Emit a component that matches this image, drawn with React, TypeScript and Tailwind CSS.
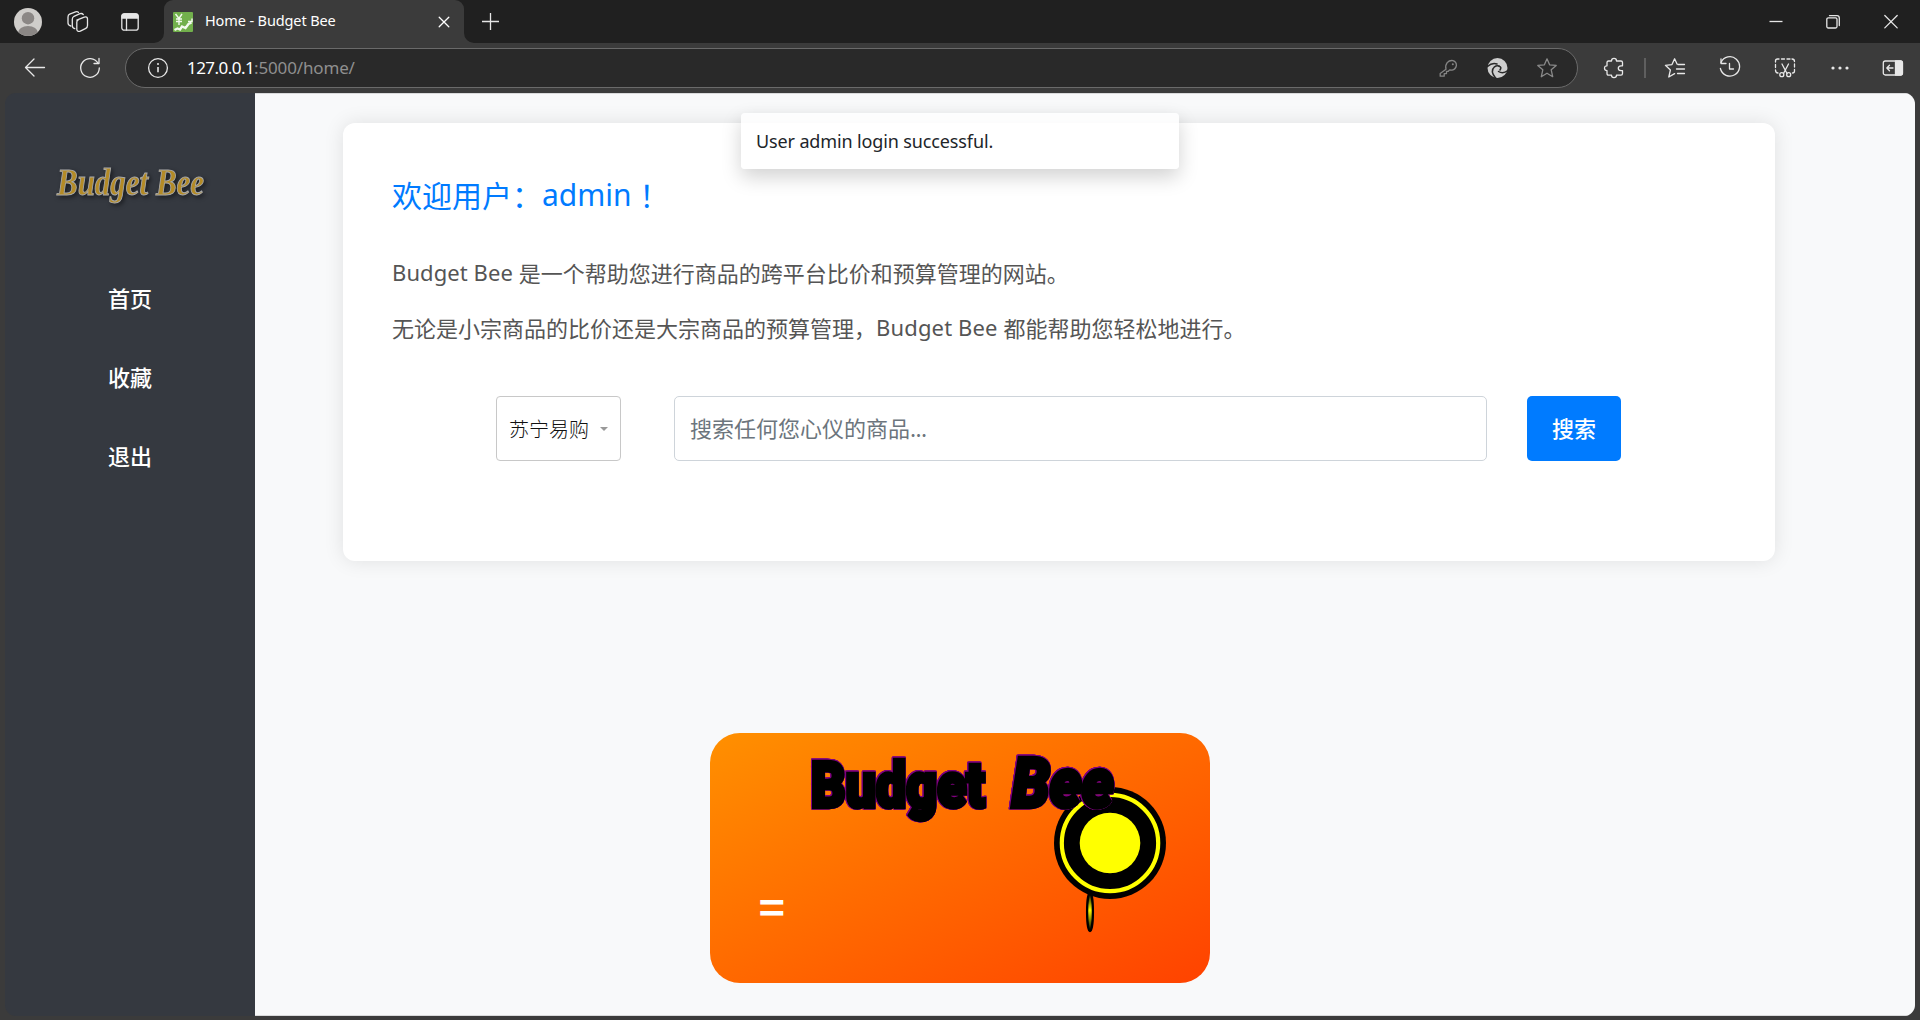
import React from "react";

type IconProps = { children: React.ReactNode; className?: string };

function Icon({ children, className = "" }: IconProps) {
  return (
    <svg
      viewBox="0 0 24 24"
      fill="none"
      stroke="currentColor"
      strokeWidth="1.3"
      strokeLinecap="round"
      strokeLinejoin="round"
      className={`size-6 shrink-0 ${className}`}
    >
      {children}
    </svg>
  );
}

const STAR =
  "M12 2.8l2.6 6 6.6.6-5 4.4 1.5 6.9L12 17.2l-5.7 3.5 1.5-6.9-5-4.4 6.6-.6z";

function TabStrip() {
  return (
    <div className="flex h-[43px] items-center bg-[#202020] text-[#e6e6e6]">
      <svg viewBox="0 0 28 28" className="ml-3.5 size-7 shrink-0">
        <defs>
          <clipPath id="avatar">
            <circle cx="14" cy="14" r="14" />
          </clipPath>
        </defs>
        <g clipPath="url(#avatar)">
          <rect width="28" height="28" fill="#cfcdca" />
          <circle cx="14" cy="10.2" r="6.2" fill="#8b8785" />
          <ellipse cx="14" cy="25" rx="10" ry="7" fill="#8b8785" />
        </g>
      </svg>
      <Icon className="ml-6">
        <path d="M10.800 10.200l7.500-3q3-1 3.200 1.700v6.700q0 2-1.700 2.800l-5.500 2.800q-3 1-3.500-1.700V12q0-1.500 1.500-2.200z" />
        <path d="M8.800 18.600q-2.500-.6-2.500-2.800V9.200q0-2 1.700-2.900l6-2.600q2.200-.6 3.300.9" />
        <path d="M4.800 16q-2.800-.6-2.800-2.900V6.900q0-2 1.700-2.800l5.800-2.300q2-.6 3 .6" />
      </Icon>
      <Icon className="ml-7">
        <rect x="3.800" y="3.800" width="16.400" height="16.400" rx="2.500" />
        <path d="M4 6.500Q4 3.800 6.500 3.800h11q2.500 0 2.500 2.700V8H4z" fill="currentColor" />
        <path d="M8.500 8v12" />
      </Icon>
      <div className="relative ml-[22px] flex h-[43px] w-[300px] items-center rounded-t-[9px] bg-[#3b3b3b]">
        <svg viewBox="0 0 10 10" className="absolute bottom-0 -left-2.5 size-2.5">
          <path d="M10 0v10H0A10 10 0 0 0 10 0z" fill="#3b3b3b" />
        </svg>
        <svg viewBox="0 0 10 10" className="absolute bottom-0 -right-2.5 size-2.5">
          <path d="M0 0v10h10A10 10 0 0 1 0 0z" fill="#3b3b3b" />
        </svg>
        <svg viewBox="0 0 20 20" className="ml-[9px] size-5 shrink-0">
          <rect width="20" height="20" rx="1" fill="#72b04c" />
          <g stroke="#f3faee" fill="none">
            <path d="M2.500 2l3.500 4.500L9 2M6 6.500V13M3 7h6M3 9.500h6" strokeWidth="1.400" />
            <path d="M1.500 18l3-1.500 2.500 1 2-3 3.500 1.500L15.500 12l3-1.500" strokeWidth="2.300" />
            <path d="M15 9.500h4v-3" strokeWidth="1.400" />
          </g>
        </svg>
        <span className="mb-0.5 ml-3 whitespace-nowrap font-['Noto_Sans'] text-[14.5px] tracking-[-0.12px] text-white">
          Home - Budget Bee
        </span>
        <Icon className="ml-auto mr-2 text-white">
          <path d="M7.200 7.200l9.600 9.600M16.800 7.200l-9.600 9.600" />
        </Icon>
      </div>
      <Icon className="ml-3.5">
        <path d="M12.500 3v17M4 11.500h17" strokeLinecap="butt" />
      </Icon>
      <div className="ml-auto mr-[17px] flex">
        <Icon>
          <path d="M5.500 11.500h13" strokeLinecap="butt" />
        </Icon>
        <Icon className="ml-[33px]">
          <rect x="5.800" y="7.800" width="10.200" height="10.200" rx="1.500" />
          <path d="M8.500 5.700h7.500q2.300 0 2.300 2.300v7.500" />
        </Icon>
        <Icon className="ml-[34px]">
          <path d="M5.800 5.500l12.400 12.400M18.200 5.500L5.800 17.900" />
        </Icon>
      </div>
    </div>
  );
}

function Toolbar() {
  return (
    <div className="flex h-[50px] items-center bg-[#3b3b3b] text-[#e8e8e8]">
      <Icon className="ml-[23px]">
        <path d="M21.500 11.500H2.500M11 3L2.500 11.500 11 20" />
      </Icon>
      <Icon className="ml-[31px]">
        <path d="M20 7.200A9.300 9.300 0 1 0 21.300 12" />
        <path d="M21 2.500v5h-5" />
      </Icon>
      <div className="ml-[23px] flex h-10 w-[1453px] items-center rounded-full border border-[#6a6a6a] bg-[#292929]">
        <Icon className="ml-[20px]">
          <circle cx="12" cy="12" r="9.400" />
          <path d="M12 11v5.200" strokeWidth="1.600" strokeLinecap="butt" />
          <circle cx="12" cy="8" r="1" fill="currentColor" stroke="none" />
        </Icon>
        <span className="ml-[17px] whitespace-nowrap font-['Noto_Sans'] text-[17px] text-[#8f8f8f]">
          <span className="tracking-[-0.55px] text-white">127.0.0.1</span>
          <span className="tracking-[-0.15px]">:5000/home/</span>
        </span>
        <Icon className="ml-auto text-[#858585]">
          <path d="M10 13.200Q9 9.500 11.200 6.600 13.500 4 17 4.600q3.500 1.200 3.400 4.900-.8 4-4.400 4.600l-2.400-.2L12.300 15.300H10.500v2.300H8.200V20.200H4.200V17.500z" />
          <circle cx="16.800" cy="8.200" r="1" fill="currentColor" stroke="none" />
        </Icon>
        <Icon className="ml-[25px] text-[#cfcfcf]">
          <circle cx="12.500" cy="12" r="10" fill="currentColor" stroke="none" />
          <g stroke="#292929">
            <path d="M2.500 10.500Q7 6.300 12 8" strokeWidth="1.500" />
            <path d="M10.500 22Q4.800 15 9.500 10.800 11.500 9.300 14 10" strokeWidth="1.500" />
            <path d="M22.800 14.500Q18 18.500 13.500 15.500" strokeWidth="1.500" />
            <path d="M14 10.200Q17 11 15 14" strokeWidth="1.600" />
          </g>
        </Icon>
        <Icon className="ml-[26px] mr-[18px] text-[#8a8a8a]">
          <path d={STAR} />
        </Icon>
      </div>
      <Icon className="ml-6">
        <path d="M6.500 5H9.500Q9.500 2.400 12 2.400T14.500 5H19Q20.500 5 20.500 6.500V9.800H19Q16.300 10 16.300 12.200T19 14.600H20.500V17.600Q20.500 19.200 19 19.200H14.500Q14.500 21.600 12 21.600T9.500 19.200H6.500Q5 19.200 5 17.600V14.600Q2.500 14.600 2.500 12.200T5 9.800V6.500Q5 5 6.500 5z" />
      </Icon>
      <div className="ml-[18px] h-5 w-0.5 bg-[#5f5f5f]" />
      <Icon className="ml-[17px]">
        <path d="M14.200 8.200L11.600 2.800 9 8.600l-6.600.7 5 4.700-1.600 7 5.800-3.400" />
        <path d="M15 8.500h6.500M13.500 13h8M14.500 17.500h7" />
      </Icon>
      <Icon className="ml-[31px]">
        <path d="M3 6.500A9.700 9.700 0 1 1 2.400 12.500" />
        <path d="M3 2.800v4.700h5" />
        <path d="M11.500 7.500V13h4" />
      </Icon>
      <Icon className="ml-[31px]">
        <path d="M2.500 6V5q0-2 2-2h1.500M8.500 3h3M14 3h3M19 3q2.500 0 2.500 2.500M21.500 8v3M21.500 13.500v1.500q0 2-2 2M2.500 8.500v3M2.500 14q0 3 2.500 3" />
        <path d="M9 8l5 9.500M15.500 8l-5 9.500" />
        <circle cx="8.800" cy="18.700" r="2" />
        <circle cx="15.700" cy="18.700" r="2" />
      </Icon>
      <Icon className="ml-[31px]">
        <g fill="currentColor" stroke="none">
          <circle cx="5" cy="12" r="1.600" />
          <circle cx="12" cy="12" r="1.600" />
          <circle cx="19" cy="12" r="1.600" />
        </g>
      </Icon>
      <Icon className="ml-[29px]">
        <rect x="2.300" y="5" width="19" height="14" rx="2" />
        <path d="M14.500 5h5q2 0 2 2v10q0 2-2 2h-5z" fill="currentColor" />
        <path d="M12 12H6M8.500 9.200L5.800 12l2.700 2.800" />
      </Icon>
    </div>
  );
}

function Sidebar() {
  return (
    <aside className="w-[250px] shrink-0 bg-[#353940]">
      <svg viewBox="0 0 250 90" className="mt-[52px] h-[90px] w-[250px]">
        <text
          x="52"
          y="50"
          textLength="147"
          lengthAdjust="spacingAndGlyphs"
          className="font-['Liberation_Serif'] text-[37px] font-bold italic [filter:drop-shadow(2px_2px_2px_rgba(0,0,0,0.5))]"
          fill="#b48b26"
          stroke="#a9a9a9"
          strokeWidth="1"
        >
          Budget Bee
        </text>
      </svg>
      <nav className="mt-[23px] flex flex-col items-center font-['Noto_Sans_CJK_SC'] text-[22px] font-medium text-white">
        {["首页", "收藏", "退出"].map((label) => (
          <a key={label} className="flex h-[79px] items-center">
            {label}
          </a>
        ))}
      </nav>
    </aside>
  );
}

function BeeBanner() {
  return (
    <svg viewBox="0 0 500 250" className="ml-[455px] mt-[172px] h-[250px] w-[500px]">
      <defs>
        <linearGradient id="banner" x1="0" y1="0" x2="1" y2="1">
          <stop offset="0" stopColor="#ff9000" />
          <stop offset="1" stopColor="#ff4200" />
        </linearGradient>
        <linearGradient id="sting" x1="0" y1="0" x2="0" y2="1">
          <stop offset="0" stopColor="#000" />
          <stop offset="0.45" stopColor="#ff0" />
          <stop offset="1" stopColor="#000" />
        </linearGradient>
      </defs>
      <rect width="500" height="250" rx="30" fill="url(#banner)" />
      <ellipse cx="380" cy="179" rx="2.900" ry="19" fill="url(#sting)" stroke="#000" strokeWidth="2.300" />
      <circle cx="400" cy="110" r="56" fill="#000" />
      <circle cx="400" cy="110" r="48.200" fill="#000" stroke="#ff0" strokeWidth="4.200" />
      <circle cx="400" cy="110" r="30.300" fill="#ff0" />
      <g
        className="font-['Roboto'] font-black [filter:drop-shadow(0.7px_0_0_#800080)_drop-shadow(-0.7px_0_0_#800080)_drop-shadow(0_0.6px_0_#800080)_drop-shadow(0_-0.6px_0_#800080)]"
        stroke="#000"
        strokeWidth="4.500"
      >
        <text transform="translate(101 73.500) scale(0.78 1)" textLength="223" lengthAdjust="spacingAndGlyphs" fontSize="63">
          Budget
        </text>
        <text transform="translate(302 73.500) scale(0.84 1)" textLength="121" lengthAdjust="spacingAndGlyphs" fontSize="68" fontStyle="italic">
          Bee
        </text>
      </g>
      <text transform="translate(48.500 189) scale(1.14 1)" fontSize="40" fill="#fff" className="font-['Liberation_Sans'] font-bold">
        =
      </text>
    </svg>
  );
}

function SearchForm() {
  return (
    <form className="ml-[103px] mt-[41px] flex h-[65px]">
      <div className="flex w-[125px] items-center rounded-[4px] border border-[#c8c8c8] pl-[12px] font-['Noto_Sans_CJK_SC'] text-[20px] font-light text-[#111]">
        苏宁易购
        <span className="ml-[11px] border-x-4 border-t-4 border-x-transparent border-t-[#999]" />
      </div>
      <div className="ml-[53px] flex w-[813px] items-center rounded-[5px] border border-[#ced4da] pb-0.5 pl-[15px] font-['Noto_Sans_CJK_SC'] text-[22px] text-[#6c757d]">
        <span>搜索任何您心仪的商品</span>
        <span className="tracking-[-0.6px]">...</span>
      </div>
      <button
        type="button"
        className="ml-10 w-[94px] rounded-[5px] bg-[#007bff] pb-0.5 font-['Noto_Sans_CJK_SC'] text-[22px] font-medium text-white"
      >
        搜索
      </button>
    </form>
  );
}

export default function App() {
  return (
    <div className="flex h-[1020px] w-[1920px] flex-col overflow-hidden bg-[#3b3b3b]">
      <TabStrip />
      <Toolbar />
      <div className="relative mx-[5px] flex h-[923px] overflow-hidden rounded-[11px]">
        <Sidebar />
        <main className="flex-1 border-y border-[#d9dadb] bg-[#f8f9fa]">
          <section className="ml-[88px] mt-[29px] h-[438px] w-[1432px] rounded-[12px] bg-white px-[50px] pt-[1px] font-['Noto_Sans','Noto_Sans_CJK_SC',sans-serif] shadow-[0_0_20px_rgba(0,0,0,0.1)]">
            <h1 className="-ml-px mt-[47px] flex h-[46px] items-center whitespace-nowrap text-[30px] text-[#007bff]">
              <span className="font-['Noto_Sans_CJK_SC']">欢迎用户：</span>
              <span>admin</span>
              <span className="font-['Noto_Sans_CJK_TC']" lang="zh-TW">
                ！
              </span>
            </h1>
            <p className="-ml-px mt-[28px] flex h-[55px] items-center whitespace-pre text-[22px] text-[#555]">
              <span className="tracking-[0.08px]">Budget Bee </span>
              <span className="font-['Noto_Sans_CJK_SC']">是一个帮助您进行商品的跨平台比价和预算管理的网站。</span>
            </p>
            <p className="-ml-px flex h-[55px] items-center whitespace-pre text-[22px] text-[#555]">
              <span className="font-['Noto_Sans_CJK_SC']">无论是小宗商品的比价还是大宗商品的预算管理，</span>
              <span className="tracking-[0.15px]">Budget Bee </span>
              <span className="font-['Noto_Sans_CJK_SC']">都能帮助您轻松地进行。</span>
            </p>
            <SearchForm />
          </section>
          <BeeBanner />
        </main>
        <div className="absolute left-[736px] top-5 flex h-14 w-[438px] items-center rounded-[4px] bg-white/85 pl-[15px] font-['Noto_Sans'] text-[18px] tracking-[-0.13px] text-[#212529] shadow-[0_8px_20px_rgba(0,0,0,0.18)]">
          User admin login successful.
        </div>
      </div>
    </div>
  );
}
